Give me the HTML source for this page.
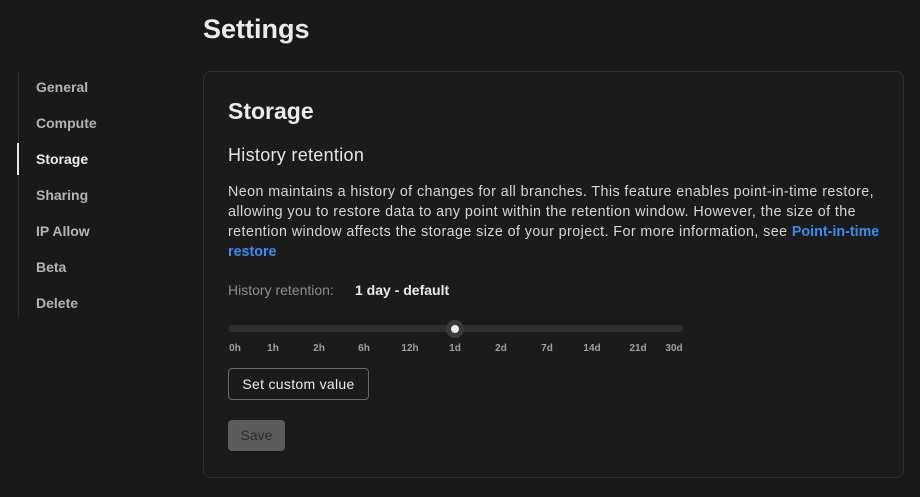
<html><head><style>
body{margin:0;width:920px;height:497px;background:#191919;font-family:"Liberation Sans",sans-serif;position:relative;overflow:hidden;color:#e6e6e6}
.a{position:absolute;white-space:nowrap}
.nav{font-size:14px;font-weight:bold;color:#b4b4b4;left:36px}
.p{font-size:14.3px;color:#d6d6d6;left:228px;letter-spacing:0.42px}
.p b{letter-spacing:0;color:#3b8cf0}
.t{font-size:10px;font-weight:bold;color:#a0a0a0;top:343px;transform:translateX(-50%)}
</style></head><body>
<div class="a" style="left:203px;top:14px;font-size:27px;font-weight:bold;color:#ececec">Settings</div>
<div class="a" style="left:18px;top:72px;width:1px;height:246px;background:#2e2e2e"></div>
<div class="a" style="left:17px;top:143px;width:2px;height:32px;background:#e6e6e6"></div>
<div class="a nav" style="top:79px">General</div>
<div class="a nav" style="top:115px">Compute</div>
<div class="a nav" style="top:151px;color:#ececec">Storage</div>
<div class="a nav" style="top:187px">Sharing</div>
<div class="a nav" style="top:223px">IP Allow</div>
<div class="a nav" style="top:259px">Beta</div>
<div class="a nav" style="top:295px">Delete</div>
<div class="a" style="left:203px;top:71px;width:699px;height:405px;border:1px solid #2f2f2f;border-radius:8px;background:#1b1b1b"></div>
<div class="a" style="left:228px;top:98px;font-size:23px;font-weight:bold;color:#ececec">Storage</div>
<div class="a" style="left:228px;top:145px;font-size:18px;color:#e6e6e6;letter-spacing:0.3px">History retention</div>
<div class="a p" style="top:184px">Neon maintains a history of changes for all branches. This feature enables point-in-time restore,</div>
<div class="a p" style="top:204px">allowing you to restore data to any point within the retention window. However, the size of the</div>
<div class="a p" style="top:224px">retention window affects the storage size of your project. For more information, see <b>Point-in-time</b></div>
<div class="a p" style="top:244px"><b>restore</b></div>
<div class="a" style="left:228px;top:282px;font-size:14px;color:#8c8c8c">History retention:</div>
<div class="a" style="left:355px;top:282px;font-size:14px;font-weight:bold;color:#ececec">1 day - default</div>
<div class="a" style="left:228px;top:325px;width:455px;height:7px;border-radius:4px;background:#2e2e2e"></div>
<div class="a" style="left:446px;top:320px;width:18px;height:18px;border-radius:50%;background:#3a3a3a"></div>
<div class="a" style="left:451px;top:325px;width:8px;height:8px;border-radius:50%;background:#ececec"></div>
<div class="a t" style="left:235px">0h</div><div class="a t" style="left:273px">1h</div><div class="a t" style="left:319px">2h</div><div class="a t" style="left:364px">6h</div><div class="a t" style="left:410px">12h</div><div class="a t" style="left:455px">1d</div><div class="a t" style="left:501px">2d</div><div class="a t" style="left:547px">7d</div><div class="a t" style="left:592px">14d</div><div class="a t" style="left:638px">21d</div><div class="a t" style="left:674px">30d</div>
<div class="a" style="left:228px;top:368px;width:139px;height:30px;border:1px solid #6a6a6a;border-radius:4px;font-size:14px;color:#ececec;line-height:30px;text-align:center;letter-spacing:0.3px">Set custom value</div>
<div class="a" style="left:228px;top:420px;width:57px;height:31px;border-radius:4px;background:#5c5c5c;font-size:14px;color:#2a2a2a;line-height:31px;text-align:center">Save</div>
</body></html>
